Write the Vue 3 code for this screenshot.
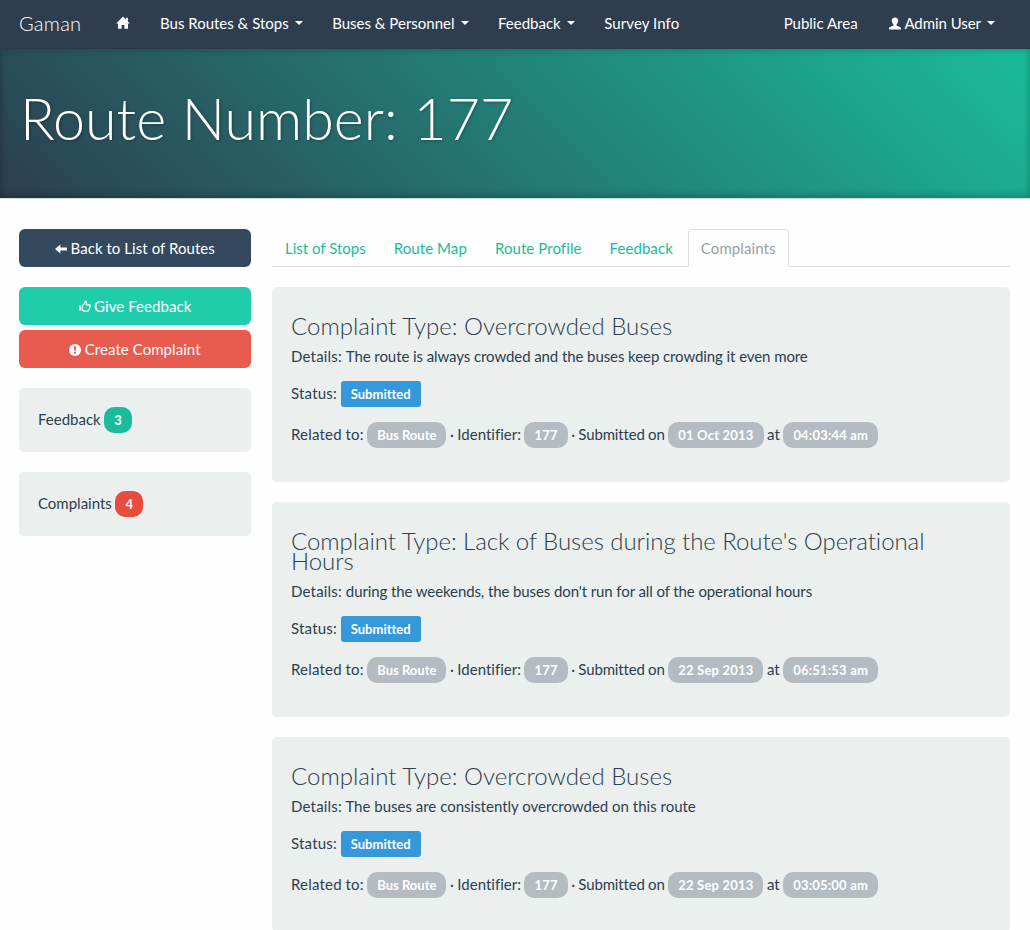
<script setup>
const menu = [
  { label: 'Bus Routes & Stops', caret: true },
  { label: 'Buses & Personnel', caret: true },
  { label: 'Feedback', caret: true },
  { label: 'Survey Info', caret: false }
]
const tabs = ['List of Stops', 'Route Map', 'Route Profile', 'Feedback', 'Complaints']
const complaints = [
  {
    type: 'Overcrowded Buses',
    details: 'The route is always crowded and the buses keep crowding it even more',
    date: '01 Oct 2013',
    time: '04:03:44 am'
  },
  {
    type: "Lack of Buses during the Route's Operational Hours",
    details: "during the weekends, the buses don't run for all of the operational hours",
    date: '22 Sep 2013',
    time: '06:51:53 am'
  },
  {
    type: 'Overcrowded Buses',
    details: 'The buses are consistently overcrowded on this route',
    date: '22 Sep 2013',
    time: '03:05:00 am'
  }
]
</script>

<template>
  <div class="page">
    <nav class="navbar">
      <a class="brand">Gaman</a>
      <a class="home">
        <svg width="14" height="14" viewBox="0 0 14 14" fill="#fff">
          <path d="M7 .6 10 3.6V1.8h1.900v3.700L13.800 7.600H12v5.200H8.400V9H5.600v3.800H2V7.600H.2z" />
        </svg>
      </a>
      <a v-for="item in menu" :key="item.label" class="item">{{ item.label }}<i v-if="item.caret" class="caret"></i></a>
      <a class="item public">Public Area</a>
      <a class="item user">
        <svg class="icon" width="12" height="13" viewBox="0 0 12 13" fill="#fff">
          <path d="M6 .4c2.100 0 3.200 1.300 3.200 3.100 0 1.600-.7 3-1.600 3.800v1.200c.5.9 4.200 1.200 4.400 2.600v1.500H0v-1.500c.2-1.400 3.900-1.700 4.400-2.600V7.300C3.500 6.500 2.800 5.100 2.800 3.500 2.800 1.700 3.900.4 6 .4z" />
        </svg>
        Admin User<i class="caret"></i>
      </a>
    </nav>

    <header class="hero">
      <h1>Route Number: 177</h1>
    </header>

    <div class="body">
      <aside class="side">
        <a class="btn dark">
          <svg class="icon arrow" width="12" height="10" viewBox="0 0 12 10" fill="#fff">
            <path d="M0 5 5.400.6V3.500H12V6.500H5.400V9.400z" />
          </svg>
          Back to List of Routes
        </a>
        <a class="btn green">
          <svg class="icon" width="12" height="13" viewBox="0 0 13 13" fill="none" stroke="#fff" stroke-width="1.3" stroke-linejoin="round">
            <path d="M3.600 5.700 6.300 3 6.700.9C8.300.7 8.700 2.200 7.900 4.700H11.500C12.500 4.900 12.400 6.200 11.700 6.600 12 7.400 11.800 8.100 11.200 8.500 11.300 9.300 11 9.900 10.400 10.200 10.400 11 10 11.500 9.200 11.500H5.600L3.600 10.500z" />
            <path d="M1.200 5.500V11" stroke-width="1.600" />
          </svg>
          Give Feedback
        </a>
        <a class="btn red">
          <svg class="icon" width="12" height="12" viewBox="0 0 13 13">
            <circle cx="6.500" cy="6.500" r="6.500" fill="#fff" />
            <path d="M5.200 2.500H7.800L7.300 7.300H5.700z M5.500 8.400H7.500V10.400H5.500z" fill="#e85c4f" />
          </svg>
          Create Complaint
        </a>
        <div class="well small">Feedback <b class="badge teal">3</b></div>
        <div class="well small">Complaints <b class="badge danger">4</b></div>
      </aside>

      <main class="main">
        <div class="tabs">
          <a v-for="tab in tabs" :key="tab" class="tab" :class="{ active: tab === 'Complaints' }">{{ tab }}</a>
        </div>
        <section v-for="(c, i) in complaints" :key="i" class="well card">
          <h3>Complaint Type: {{ c.type }}</h3>
          <p><span class="lead">Details:</span> <span class="details">{{ c.details }}</span></p>
          <p class="status"><span class="lead">Status:</span> <b class="badge label">Submitted</b></p>
          <p class="meta"><span class="lead">Related to:</span> <b class="badge">Bus Route</b> · Identifier: <b class="badge num">177</b> <span class="on">· Submitted on</span> <b class="badge num">{{ c.date }}</b> at <b class="badge num">{{ c.time }}</b></p>
        </section>
      </main>
    </div>
  </div>
</template>

<style>
body {
  background: #fefefe;
}
</style>

<style scoped>
.page {
  box-sizing: border-box;
  height: 930px;
  overflow: hidden;
  font: 15px/20px Lato, sans-serif;
  font-variant-ligatures: none;
  color: #2c3e50;
}
.navbar {
  box-sizing: border-box;
  height: 49px;
  display: flex;
  align-items: center;
  padding: 0 35px 2px 19px;
  background: #2f3e4f;
  border-bottom: 1px solid #2a3a49;
  color: #fff;
}
.brand {
  width: 96.500px;
  font-size: 20px;
  font-weight: 300;
  letter-spacing: 0.25px;
  padding-bottom: 1px;
}
.home {
  width: 44.500px;
  display: flex;
}
.item {
  margin-right: 29.500px;
  white-space: nowrap;
}
.item:nth-child(6) {
  letter-spacing: 0.08px;
}
.public {
  margin-left: auto;
  margin-right: 31px;
}
.user {
  margin-right: 0;
  letter-spacing: -0.05px;
}
.icon {
  vertical-align: -1px;
  margin-right: 0.5px;
}
.btn .icon {
  margin: 0 -0.5px 0 0;
}
.btn .arrow {
  vertical-align: 0;
}
.caret {
  display: inline-block;
  margin-left: 6px;
  vertical-align: 4px;
  border: 4px solid transparent;
  border-top-color: #fff;
  border-bottom: 0;
}
.hero {
  box-sizing: border-box;
  height: 150px;
  padding: 40px 20px 0;
  background: linear-gradient(45deg, #2c3e50 0%, #1abc9c 100%) padding-box;
  border-bottom: 1px solid #cfdddb;
  box-shadow: inset 0 -3px 7px rgba(0, 0, 0, 0.2), inset 0 3px 7px rgba(0, 0, 0, 0.1);
}
h1 {
  margin: 0;
  font-size: 57.400px;
  line-height: 58px;
  font-weight: 300;
  color: #fff;
  text-shadow: 1px 1px 3px rgba(0, 0, 0, 0.3);
}
.body {
  display: flex;
  gap: 21px;
  padding: 30px 20px 0 19px;
}
.side {
  width: 232px;
}
.btn {
  display: block;
  box-sizing: border-box;
  height: 38px;
  line-height: 38px;
  border-radius: 6px;
  text-align: center;
  letter-spacing: 0.06px;
  color: #fff;
}
.dark {
  background: #34495e;
  margin-bottom: 20px;
}
.green {
  background: #1fcdad;
  margin-bottom: 5px;
}
.red {
  background: #e85c4f;
  margin-bottom: 20px;
}
.well {
  box-sizing: border-box;
  background: #ebefee;
  border-radius: 5px;
  margin-bottom: 20px;
}
.small {
  height: 64px;
  padding: 21px 19px 0;
  word-spacing: -0.5px;
}
.main {
  width: 738px;
}
.tabs {
  display: flex;
  height: 37px;
  border-bottom: 1px solid #dddfdf;
  margin-bottom: 20px;
}
.tab {
  box-sizing: border-box;
  height: 38px;
  padding: 8px 12px;
  border: 1px solid transparent;
  margin-right: 2px;
  color: #1abc9c;
  letter-spacing: 0.08px;
  white-space: nowrap;
}
.tab:first-child {
  letter-spacing: 0;
}
.active {
  color: #9aa0a2;
  background: #fefefe;
  border-color: #dddfdf;
  border-bottom-color: #fefefe;
  border-radius: 4px 4px 0 0;
}
.card {
  padding: 29px 20px 37px 19px;
}
h3 {
  margin: 0 0 10px;
  font-size: 24px;
  line-height: 20px;
  font-weight: 300;
}
.card:nth-of-type(2) h3 {
  letter-spacing: -0.06px;
}
p {
  margin: 0;
}
.lead {
  letter-spacing: 0.2px;
}
.card:nth-of-type(1) .details {
  letter-spacing: -0.085px;
}
.card:nth-of-type(2) .details {
  letter-spacing: -0.1px;
}
.status {
  margin-top: 17px;
}
.meta {
  margin-top: 20px;
  word-spacing: -0.3px;
}
.on {
  letter-spacing: -0.15px;
}
.badge {
  display: inline-block;
  height: 26px;
  margin: -3px 0;
  padding: 0 10px;
  border-radius: 10px;
  background: #b4bcc2;
  color: #fff;
  font-size: 13px;
  line-height: 26px;
  font-weight: 700;
  word-spacing: 0;
}
.num {
  letter-spacing: 0.2px;
}
.label {
  background: #3498db;
  border-radius: 3px;
}
.teal {
  background: #1abc9c;
}
.danger {
  background: #e74c3c;
}
.small .badge {
  min-width: 8px;
  text-align: center;
}
</style>
